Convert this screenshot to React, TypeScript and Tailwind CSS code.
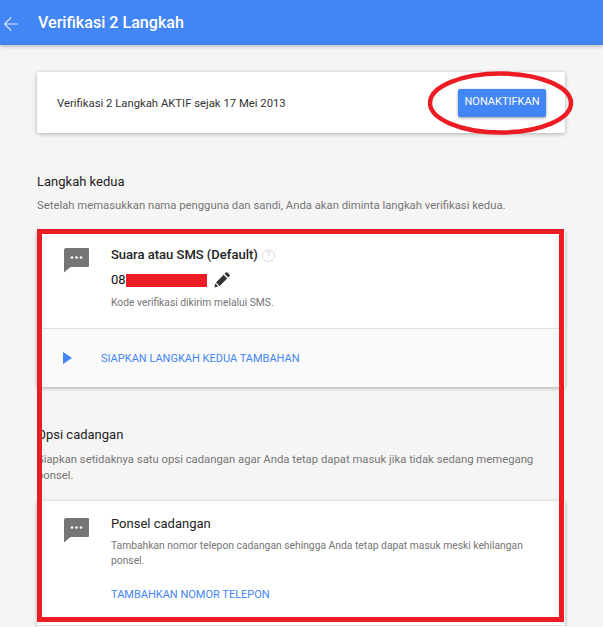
import { ArrowLeft } from 'lucide-react';

function MessageIcon() {
  return (
    <svg width="25" height="25" viewBox="0 0 25 25" className="block">
      <path
        d="M2 0h22a1 1 0 0 1 1 1v17a1 1 0 0 1-1 1H6.5L0 24.5V2a2 2 0 0 1 2-2z"
        fill="#757575"
      />
      <circle cx="8" cy="9.5" r="1.3" fill="#fff" />
      <circle cx="12.5" cy="9.5" r="1.3" fill="#fff" />
      <circle cx="17" cy="9.5" r="1.3" fill="#fff" />
    </svg>
  );
}

function PencilIcon() {
  return (
    <svg width="16" height="16" viewBox="0 0 16 16" className="block">
      <path d="M0.5 15.5l0.8-4.2 2.9 3.3z" fill="#333" />
      <path d="M2 10.4l7.6-7.6 3.6 3.6-7.6 7.6z" fill="#333" />
      <path d="M10.6 1.8l1.2-1.2a1.2 1.2 0 0 1 1.7 0l1.9 1.9a1.2 1.2 0 0 1 0 1.7l-1.2 1.2z" fill="#333" />
    </svg>
  );
}

export default function App() {
  return (
    <div className="relative h-[627px] w-[603px] overflow-hidden bg-[#f5f5f5] font-['Roboto',sans-serif]">
      {/* Header */}
      <header className="flex h-[45px] items-center bg-[#4285f4] shadow-[0_1px_4px_rgba(0,0,0,0.3)]">
        <div className="flex w-[38px] justify-start pt-[2px]">
          <ArrowLeft size={22} strokeWidth={1.25} className="text-[#e3ecfd]" />
        </div>
        <h1 className="pt-[1px] text-[16.1px] font-medium text-white">Verifikasi 2 Langkah</h1>
      </header>

      <main className="px-[37px] pt-[27px]">
        {/* Status card */}
        <div className="flex h-[61px] w-[528px] items-center justify-between rounded-[2px] bg-white pl-[20px] pr-[19px] shadow-[0_1px_4px_rgba(0,0,0,0.3)]">
          <p className="pt-[3px] text-[11.3px] text-[#333]">Verifikasi 2 Langkah AKTIF sejak 17 Mei 2013</p>
          <button className="h-[28px] w-[88px] rounded-[2px] bg-[#4285f4] text-[11px] text-white shadow-[0_1px_3px_rgba(0,0,0,0.4)]">
            NONAKTIFKAN
          </button>
        </div>

        {/* Second step */}
        <h2 className="mt-[41px] text-[13px] leading-[16px] text-[#222]">Langkah kedua</h2>
        <p className="mt-[9px] text-[11.3px] leading-[14px] text-[#757575]">
          Setelah memasukkan nama pengguna dan sandi, Anda akan diminta langkah verifikasi kedua.
        </p>

        <div className="mt-[18px] w-[528px] bg-white shadow-[0_1px_4px_rgba(0,0,0,0.3)]">
          <div className="flex h-[97px] border-l border-[#4285f4] pl-[26px] pt-[17px]">
            <div className="w-[47px] shrink-0">
              <MessageIcon />
            </div>
            <div className="-mt-[1px]">
              <div className="flex items-center gap-[4px]">
                <span className="text-[13px] font-medium leading-[16px] text-[#222]">Suara atau SMS (Default)</span>
                <span className="flex h-[13px] w-[13px] items-center justify-center rounded-full border border-[#ddd] text-[9px] leading-none text-[#ccc]">
                  ?
                </span>
              </div>
              <div className="mt-[9px] flex h-[16px] items-center">
                <span className="text-[13px] leading-[16px] text-[#111]">08</span>
                <span className="h-[13px] w-[81px] bg-[#ed1c24]" />
                <span className="ml-[7px]">
                  <PencilIcon />
                </span>
              </div>
              <p className="mt-[9px] text-[10.3px] leading-[12px] text-[#757575]">Kode verifikasi dikirim melalui SMS.</p>
            </div>
          </div>
          <div className="flex h-[59px] items-center border-t border-[#e0e0e0] bg-[#fafafa] pl-[26px]">
            <span className="h-0 w-0 border-y-[6px] border-l-[9px] border-y-transparent border-l-[#4285f4]" />
            <span className="ml-[29px] pt-[2px] text-[11px] text-[#4285f4]">SIAPKAN LANGKAH KEDUA TAMBAHAN</span>
          </div>
        </div>

        {/* Backup options */}
        <h2 className="mt-[40px] text-[13px] leading-[16px] text-[#222]">Opsi cadangan</h2>
        <p className="mt-[9px] w-[500px] text-[11.3px] leading-[16px] text-[#757575]">
          Siapkan setidaknya satu opsi cadangan agar Anda tetap dapat masuk jika tidak sedang memegang ponsel.
        </p>

        <div className="mt-[17px] h-[125px] w-[528px] border-b border-[#ddd] bg-white pl-[27px] pt-[17px] shadow-[0_1px_4px_rgba(0,0,0,0.3)]">
          <div className="flex">
            <div className="w-[47px] shrink-0">
              <MessageIcon />
            </div>
            <div className="-mt-[1px]">
              <h3 className="text-[13px] leading-[14px] text-[#222]">Ponsel cadangan</h3>
              <p className="mt-[7px] w-[430px] text-[10.3px] leading-[15px] text-[#757575]">
                Tambahkan nomor telepon cadangan sehingga Anda tetap dapat masuk meski kehilangan ponsel.
              </p>
              <p className="mt-[20px] text-[11px] leading-[14px] text-[#4285f4]">TAMBAHKAN NOMOR TELEPON</p>
            </div>
          </div>
        </div>
        <div className="h-[40px] w-[528px] bg-white" />
      </main>

      {/* Red annotations drawn over the page */}
      <svg width="146" height="64" viewBox="0 0 146 64" className="absolute left-[428px] top-[71px]">
        <ellipse cx="72.5" cy="32" rx="70.5" ry="29.5" fill="none" stroke="#ed1c24" strokeWidth="4.5" />
      </svg>
      <div className="absolute left-[37px] top-[229px] h-[393px] w-[527px] border-[5px] border-[#ed1c24]" />
    </div>
  );
}
